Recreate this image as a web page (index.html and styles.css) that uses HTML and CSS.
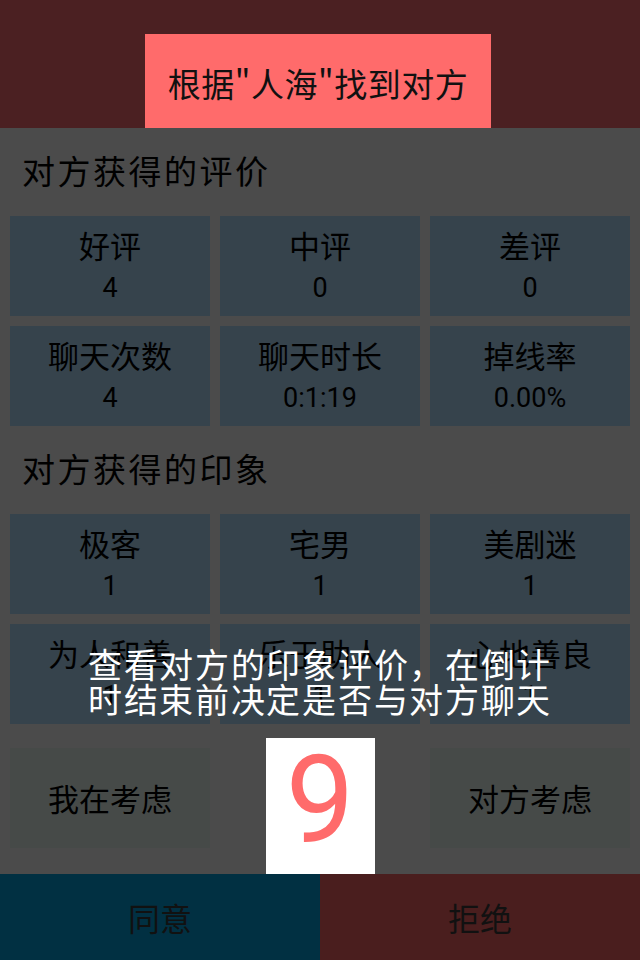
FILE: index.html
```html
<!DOCTYPE html>
<html lang="zh-CN">
<head>
<meta charset="utf-8">
<title>对方评价</title>
<link rel="stylesheet" href="styles.css">
</head>
<body>
<div class="app">
  <header class="header">
    <div class="match">根据"人海"找到对方</div>
  </header>
  <main class="main">
    <h2 class="section-title">对方获得的评价</h2>
    <div class="grid">
      <div class="cell"><span class="label">好评</span><span class="value">4</span></div>
      <div class="cell"><span class="label">中评</span><span class="value">0</span></div>
      <div class="cell"><span class="label">差评</span><span class="value">0</span></div>
      <div class="cell"><span class="label">聊天次数</span><span class="value">4</span></div>
      <div class="cell"><span class="label">聊天时长</span><span class="value">0:1:19</span></div>
      <div class="cell"><span class="label">掉线率</span><span class="value">0.00%</span></div>
    </div>
    <h2 class="section-title">对方获得的印象</h2>
    <div class="grid">
      <div class="cell"><span class="label">极客</span><span class="value">1</span></div>
      <div class="cell"><span class="label">宅男</span><span class="value">1</span></div>
      <div class="cell"><span class="label">美剧迷</span><span class="value">1</span></div>
      <div class="cell"><span class="label">为人和善</span><span class="value">1</span></div>
      <div class="cell"><span class="label">乐于助人</span><span class="value">1</span></div>
      <div class="cell"><span class="label">心地善良</span><span class="value">1</span></div>
    </div>
    <div class="decision">
      <div class="status">我在考虑</div>
      <div class="countdown">9</div>
      <div class="status">对方考虑</div>
    </div>
    <p class="tip">查看对方的印象评价，在倒计<br>时结束前决定是否与对方聊天</p>
  </main>
  <footer class="actions">
    <button class="btn agree">同意</button>
    <button class="btn reject">拒绝</button>
  </footer>
</div>
</body>
</html>
```
FILE: styles.css
```css
* { box-sizing: border-box; }
html, body { margin: 0; padding: 0; }
body {
  width: 640px;
  height: 960px;
  overflow: hidden;
  font-family: "Noto Sans CJK SC", "Noto Sans", sans-serif;
  color: #000;
  background: #4b4b4b;
}
.app {
  display: flex;
  flex-direction: column;
  height: 960px;
}
.header {
  height: 128px;
  background: #4b2022;
  display: flex;
  justify-content: center;
  align-items: flex-end;
}
.match {
  width: 346px;
  height: 94px;
  margin-left: -4px;
  background: #ff6b6b;
  display: flex;
  align-items: center;
  justify-content: center;
  font-size: 33px;
  color: #111;
  padding-top: 4px;
  letter-spacing: 0.5px;
}
.main {
  position: relative;
  flex: 1;
  background: #4b4b4b;
  padding: 0 10px;
}
.section-title {
  margin: 0;
  height: 88px;
  display: flex;
  align-items: center;
  padding-left: 12px;
  padding-bottom: 4px;
  font-size: 33px;
  font-weight: normal;
  color: #000;
  letter-spacing: 2.5px;
}
.grid {
  display: grid;
  grid-template-columns: repeat(3, 200px);
  grid-auto-rows: 100px;
  gap: 10px;
}
.cell {
  background: #36434c;
  display: flex;
  flex-direction: column;
  align-items: center;
  justify-content: center;
  gap: 10px;
  padding-bottom: 2px;
}
.label {
  font-size: 31px;
  line-height: 36px;
}
.value {
  font-family: Roboto, "Noto Sans", sans-serif;
  font-size: 27px;
  line-height: 30px;
}
.decision {
  margin-top: 14px;
  display: grid;
  grid-template-columns: 200px 1fr 200px;
  height: 136px;
}
.status {
  margin-top: 10px;
  height: 100px;
  background: #464a48;
  display: flex;
  align-items: center;
  justify-content: center;
  font-size: 31px;
  padding-bottom: 2px;
}
.countdown {
  justify-self: center;
  width: 109px;
  height: 136px;
  background: #fff;
  color: #ff6b6b;
  font-family: Roboto, sans-serif;
  font-size: 122px;
  line-height: 126px;
  text-align: center;
}
.tip {
  position: absolute;
  left: 0;
  right: 0;
  top: 521px;
  margin: 0;
  text-align: center;
  color: #fff;
  font-family: serif;
  font-size: 34px;
  line-height: 35px;
  letter-spacing: 1.7px;
}
.actions {
  display: flex;
  height: 86px;
}
.btn {
  flex: 1;
  border: 0;
  margin: 0;
  font-family: "Noto Sans CJK SC", sans-serif;
  font-size: 32px;
  color: #111;
}
.agree { background: #013042; }
.reject { background: #4a1e1e; }
```
